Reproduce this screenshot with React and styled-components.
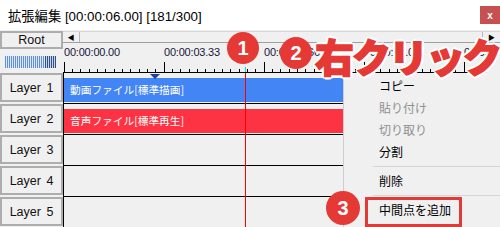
import React from "react";
import styled, { createGlobalStyle } from "styled-components";

const GlobalStyle = createGlobalStyle`
  html, body {
    margin: 0;
    padding: 0;
    background: #f0f0f0;
  }
  body {
    font-family: "Liberation Sans", "Noto Sans CJK JP", sans-serif;
  }
`;

const RED = "#e53935";

const Window = styled.div`
  position: relative;
  width: 500px;
  height: 227px;
  overflow: hidden;
  background: #f0f0f0;
`;

const TitleBar = styled.div`
  display: flex;
  align-items: center;
  height: 30px;
  padding-left: 8px;
  box-sizing: border-box;
  background: #fff;
  font-size: 13.3px;
  color: #000;
`;

const CloseButton = styled.div`
  margin-left: auto;
  width: 20px;
  height: 18px;
  background: #c75050;
  color: #fff;
  font-size: 10px;
  font-weight: bold;
  display: flex;
  align-items: center;
  justify-content: center;
`;

const Body = styled.div`
  display: flex;
  height: 197px;
`;

const Sidebar = styled.div`
  width: 63px;
  flex-shrink: 0;
  display: flex;
  flex-direction: column;
  padding-top: 1px;
`;

const SideButton = styled.div`
  height: ${(p) => p.$height}px;
  box-sizing: border-box;
  border: 2px solid #adadad;
  background: #f0f0f0;
  display: flex;
  align-items: center;
  justify-content: center;
  font-size: 12.5px;
  color: #111;
  word-spacing: 2px;
`;

const LevelMeter = styled.div`
  margin: 7px 0 0 5px;
  width: 51px;
  height: 12px;
  background: repeating-linear-gradient(
        90deg,
        #2f4f86 0 1px,
        #c9d6ea 1px 2px
      )
      right / 11px 100% no-repeat,
    repeating-linear-gradient(90deg, #5f8fd6 0 1px, #dfe8f5 1px 2px);
`;

const LayerList = styled.div`
  display: flex;
  flex-direction: column;
  gap: 2px;
  margin-top: 5px;
`;

const Timeline = styled.div`
  flex: 1;
  min-width: 0;
  display: flex;
  flex-direction: column;
  padding-top: 1px;
`;

const HScroll = styled.div`
  display: flex;
  height: 12px;
  box-sizing: border-box;
  border-top: 1px solid #d6d6d6;
  border-bottom: 1px solid #a0a0a0;
`;

const ScrollArrow = styled.div`
  width: ${(p) => p.$width}px;
  flex-shrink: 0;
  display: flex;
  align-items: center;
  justify-content: center;
  font-size: 7px;
  color: #000;
  border-left: ${(p) => (p.$right ? "1px solid #b8b8b8" : "none")};
  border-right: ${(p) => (p.$right ? "none" : "1px solid #b8b8b8")};
`;

const ScrollTrack = styled.div`
  flex: 1;
`;

const RulerRow = styled.div`
  display: flex;
  height: 30px;
`;

const Ruler = styled.div`
  flex: 1;
  min-width: 0;
  overflow: hidden;
  display: flex;
  flex-direction: column;
  border-bottom: 1px solid #000;
`;

const RulerLabels = styled.div`
  display: flex;
  height: 14px;
  padding: 2px 0 0 1px;
`;

const RulerLabel = styled.div`
  width: 100px;
  flex-shrink: 0;
  font-size: 11px;
  line-height: 14px;
  color: #16163a;
  letter-spacing: -0.2px;
`;

const VScroll = styled.div`
  width: 13px;
  flex-shrink: 0;
  border-left: 1px solid #c4c4c4;
  display: flex;
  justify-content: center;
  padding-top: 3px;
  font-size: 7px;
  color: #000;
`;

const Tracks = styled.div`
  position: relative;
  flex: 1;
  border-left: 1px solid #000;
  display: flex;
  flex-direction: column;
`;

const Track = styled.div`
  height: 30px;
  padding-top: 5px;
  box-sizing: border-box;
  flex-shrink: 0;
  & + & {
    border-top: 1px solid #000;
    height: 31px;
  }
`;

const Clip = styled.div`
  height: 24px;
  background: ${(p) => p.$color};
  color: #fff;
  font-family: "Noto Sans CJK JP", sans-serif;
  font-size: 10.7px;
  line-height: 24px;
  padding-left: 6px;
  white-space: nowrap;
`;

const Playhead = styled.div`
  position: absolute;
  z-index: 2;
  left: 181px;
  top: 0;
  bottom: 0;
  width: 1px;
  background: #ff0000;
`;

const PosMarker = styled.div`
  position: absolute;
  z-index: 1;
  left: 86px;
  top: 1px;
  width: 0;
  height: 0;
  border-left: 5px solid transparent;
  border-right: 5px solid transparent;
  border-top: 5px solid #1e3ea0;
`;

const Menu = styled.div`
  position: absolute;
  left: 343px;
  top: 73px;
  right: 0;
  bottom: 0;
  background: #f0f0f0;
  border-left: 1px solid #cdcdcd;
  padding-top: 2px;
  font-family: "Noto Sans CJK JP", sans-serif;
  font-size: 12px;
`;

const MenuItem = styled.div`
  height: 22px;
  line-height: 22px;
  padding-left: 35px;
  color: ${(p) => (p.$disabled ? "#8f8f8f" : "#000")};
`;

const MenuSeparator = styled.div`
  height: 1px;
  margin: 3px 0 3px 29px;
  background: #d5d5d5;
`;

const Badge = styled.div`
  position: absolute;
  left: ${(p) => p.$x - p.$r}px;
  top: ${(p) => p.$y - p.$r}px;
  width: ${(p) => p.$r * 2}px;
  height: ${(p) => p.$r * 2}px;
  border-radius: 50%;
  background: ${RED};
  color: #fff;
  font-family: "Liberation Sans", sans-serif;
  font-weight: bold;
  font-size: 20px;
  display: flex;
  align-items: center;
  justify-content: center;
`;

const Callout = styled.div`
  position: absolute;
  left: 315px;
  top: 27px;
  font-family: "Noto Sans CJK JP", sans-serif;
  font-weight: 900;
  font-size: 39px;
  line-height: 56px;
  letter-spacing: -2px;
  color: ${RED};
  -webkit-text-stroke: 1.5px ${RED};
  white-space: nowrap;
  text-shadow: 2px 0 0 #fff, -2px 0 0 #fff, 0 2px 0 #fff, 0 -2px 0 #fff,
    2px 2px 0 #fff, -2px 2px 0 #fff, 2px -2px 0 #fff, -2px -2px 0 #fff,
    3px 0 0 #fff, -3px 0 0 #fff, 0 3px 0 #fff, 0 -3px 0 #fff;
`;

const Highlight = styled.div`
  position: absolute;
  left: 365px;
  top: 197px;
  width: 97px;
  height: 30px;
  box-sizing: border-box;
  border: 3px solid ${RED};
`;

const RULER_W = 424;
const STEP = 100 / 12;

const RulerTicks = () => {
  const lines = [];
  for (let i = 0; 1 + i * STEP < RULER_W; i++) {
    const x = Math.floor(1 + i * STEP) + 0.5;
    const major = i % 12 === 0;
    lines.push(
      <line key={i} x1={x} x2={x} y1={major ? 3 : 10} y2={15} stroke="#000" />
    );
  }
  return (
    <svg width={RULER_W} height={15} style={{ display: "block" }}>
      {lines}
      <line x1={182.5} x2={182.5} y1={8} y2={15} stroke="#00e0f0" />
    </svg>
  );
};

const labels = [
  "00:00:00.00",
  "00:00:03.33",
  "00:00:06.66",
  "00:00:10.00",
  "00:00:13.33",
];

const layers = [
  { name: "Layer 1", clip: "動画ファイル[標準描画]", color: "#4385f5" },
  { name: "Layer 2", clip: "音声ファイル[標準再生]", color: "#fd3242" },
  { name: "Layer 3" },
  { name: "Layer 4" },
  { name: "Layer 5" },
];

const App = () => {
  return (
    <Window>
      <GlobalStyle />
      <TitleBar>
        <span>拡張編集 [00:00:06.00] [181/300]</span>
        <CloseButton>x</CloseButton>
      </TitleBar>
      <Body>
        <Sidebar>
          <SideButton $height={18}>Root</SideButton>
          <LevelMeter />
          <LayerList>
            {layers.map((layer) => (
              <SideButton key={layer.name} $height={29}>
                {layer.name}
              </SideButton>
            ))}
          </LayerList>
        </Sidebar>
        <Timeline>
          <HScroll>
            <ScrollArrow $width={16}>◀</ScrollArrow>
            <ScrollTrack />
            <ScrollArrow $width={17} $right>
              ▶
            </ScrollArrow>
          </HScroll>
          <RulerRow>
            <Ruler>
              <RulerLabels>
                {labels.map((t) => (
                  <RulerLabel key={t}>{t}</RulerLabel>
                ))}
              </RulerLabels>
              <RulerTicks />
            </Ruler>
            <VScroll>▲</VScroll>
          </RulerRow>
          <Tracks>
            {layers.map((layer) => (
              <Track key={layer.name}>
                {layer.clip && <Clip $color={layer.color}>{layer.clip}</Clip>}
              </Track>
            ))}
            <PosMarker />
            <Playhead />
          </Tracks>
        </Timeline>
      </Body>

      <Menu>
        <MenuItem>コピー</MenuItem>
        <MenuItem $disabled>貼り付け</MenuItem>
        <MenuItem $disabled>切り取り</MenuItem>
        <MenuItem>分割</MenuItem>
        <MenuSeparator />
        <MenuItem>削除</MenuItem>
        <MenuSeparator />
        <MenuItem>中間点を追加</MenuItem>
      </Menu>

      <Badge $x={243} $y={48} $r={16}>1</Badge>
      <Badge $x={296} $y={53} $r={16}>2</Badge>
      <Callout>右クリック</Callout>
      <Badge $x={343} $y={208} $r={17}>3</Badge>
      <Highlight />
    </Window>
  );
};

export default App;
